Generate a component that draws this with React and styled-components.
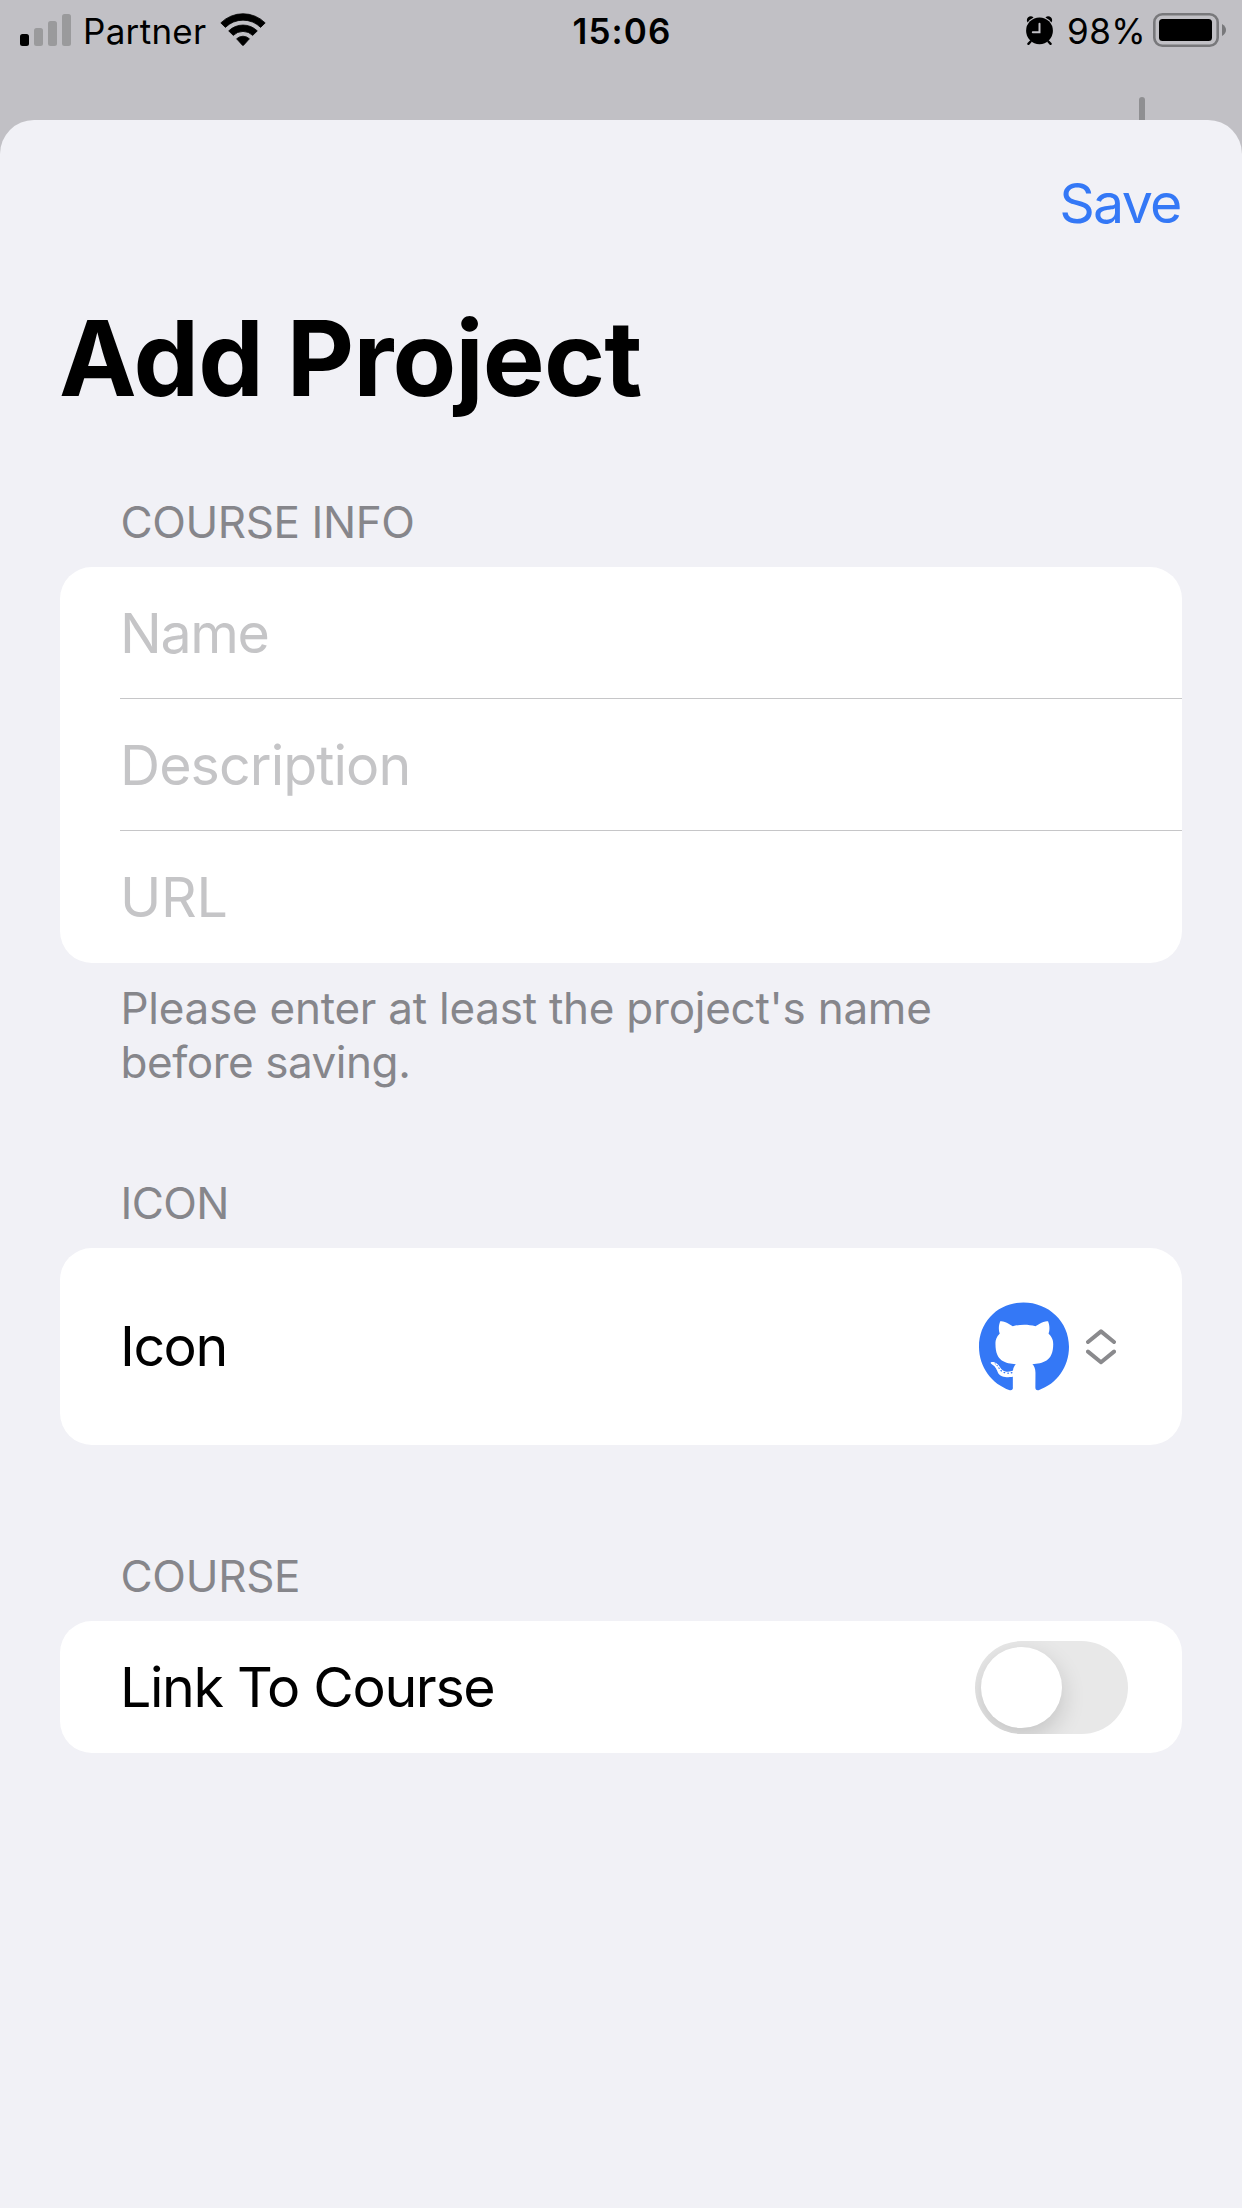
import React from "react";
import styled, { createGlobalStyle } from "styled-components";
import { FaGithub } from "react-icons/fa";

const GlobalStyle = createGlobalStyle`
  body { margin: 0; background: #c1c0c5; }
  * { box-sizing: border-box; }
`;

const Screen = styled.div`
  width: 1242px;
  height: 2208px;
  display: flex;
  flex-direction: column;
  background: #c1c0c5;
  font-family: Inter, "Liberation Sans", sans-serif;
  color: #000;
  overflow: hidden;
`;

const StatusBar = styled.header`
  height: 97px;
  padding: 13px 16px 0 20px;
  display: grid;
  grid-template-columns: 1fr auto 1fr;
  align-items: start;
`;

const StatusGroup = styled.div`
  display: flex;
  align-items: flex-start;
  justify-content: ${(p) => (p.$end ? "flex-end" : "flex-start")};
`;

const StatusText = styled.span`
  font-size: 35px;
  line-height: 37px;
  font-weight: ${(p) => p.$weight || 400};
  letter-spacing: ${(p) => p.$track || 0}px;
  margin-left: ${(p) => p.$left || 0}px;
  margin-right: ${(p) => p.$right || 0}px;
  white-space: nowrap;
`;

const Glyph = styled.svg`
  display: block;
  flex: none;
`;

const Behind = styled.div`
  height: 23px;
  display: flex;
  justify-content: flex-end;
  padding-right: 97px;
`;

const Grip = styled.div`
  width: 6px;
  height: 23px;
  border-radius: 3px 3px 0 0;
  background: #8f8f92;
`;

const Sheet = styled.main`
  flex: 1;
  display: flex;
  flex-direction: column;
  padding: 50px 60px 0;
  border-radius: 34px 34px 0 0;
  background: #f1f1f6;
`;

const Toolbar = styled.div`
  display: flex;
  justify-content: flex-end;
  padding-right: 1.5px;
`;

const SaveButton = styled.button`
  border: 0;
  padding: 0;
  background: none;
  font: 400 55.5px/66px Inter, "Liberation Sans", sans-serif;
  letter-spacing: -1.8px;
  color: #3478f6;
`;

const Title = styled.h1`
  margin: 60px 0 0 -1px;
  font-size: 104px;
  line-height: 124px;
  font-weight: 700;
  letter-spacing: -0.8px;
`;

const Section = styled.section`
  display: flex;
  flex-direction: column;
  margin-top: ${(p) => p.$top}px;
`;

const SectionHeader = styled.h2`
  margin: 0 0 18px;
  padding-left: 60.5px;
  font-size: 44px;
  line-height: 54px;
  font-weight: 400;
  letter-spacing: ${(p) => p.$track}px;
  color: #86868b;
`;

const SectionFooter = styled.p`
  margin: 18px 0 0;
  padding: 0 180px 0 60.5px;
  font-size: 44px;
  line-height: 54px;
  letter-spacing: ${(p) => p.$track}px;
  color: #86868b;
`;

const Tight = styled.span`
  letter-spacing: -0.45px;
`;

const Card = styled.div`
  display: flex;
  flex-direction: column;
  padding-left: 60px;
  border-radius: 32px;
  background: #fff;
  overflow: hidden;
`;

const Row = styled.div`
  height: ${(p) => p.$height || 132}px;
  padding-right: ${(p) => p.$right || 0}px;
  display: flex;
  align-items: center;
  justify-content: space-between;
  box-shadow: ${(p) => (p.$divided ? "inset 0 -1px #c6c6c8" : "none")};
`;

const Field = styled.input`
  width: 100%;
  height: 100px;
  margin: 0 0 2px;
  border: 0;
  padding: 0;
  outline: 0;
  background: transparent;
  font: 400 55.5px/66px Inter, "Liberation Sans", sans-serif;
  letter-spacing: ${(p) => p.$track}px;
  &::placeholder { color: #c5c5c7; opacity: 1; }
`;

const RowLabel = styled.span`
  font-size: 55.5px;
  line-height: 66px;
  margin-bottom: ${(p) => p.$lift || 0}px;
  letter-spacing: ${(p) => p.$track}px;
`;

const Picker = styled.div`
  display: flex;
  align-items: center;
  gap: 17px;
  color: #3478f6;
`;

const Badge = styled(FaGithub)`
  display: block;
  width: 90px;
  height: 93px;
  margin-top: 1px;
`;

const Switch = styled.div`
  width: 153px;
  height: 93px;
  padding: 6px;
  border-radius: 47px;
  background: #e8e8e8;
  overflow: hidden;
`;

const Knob = styled.div`
  width: 81px;
  height: 81px;
  border-radius: 50%;
  background: #fff;
  box-shadow: 0 9px 24px rgba(0, 0, 0, 0.16);
`;

function Signal() {
  return (
    <Glyph width="51" height="34" viewBox="0 0 51 34">
      <rect x="0" y="21" width="9" height="12" rx="2.5" />
      <g fill="#9a9a9c">
        <rect x="14" y="15" width="9" height="18" rx="2.5" />
        <rect x="28" y="8" width="9" height="25" rx="2.5" />
        <rect x="42" y="1" width="9" height="32" rx="2.5" />
      </g>
    </Glyph>
  );
}

function Wifi() {
  return (
    <Glyph width="46" height="34" viewBox="0 0 46 34">
      <path d="M0.8 9.9 A31.5 31.5 0 0 1 45.2 9.9 L40.6 14.4 A25 25 0 0 0 5.4 14.4 Z" strokeLinejoin="round" stroke="#000" strokeWidth="0.8" />
      <path d="M8.7 17.9 A20.4 20.4 0 0 1 37.3 17.9 L32.7 22.4 A13.8 13.8 0 0 0 13.3 22.4 Z" strokeLinejoin="round" stroke="#000" strokeWidth="0.8" />
      <path d="M16.6 25.8 A9.2 9.2 0 0 1 29.4 25.8 L23.6 32.2 Q23 32.8 22.4 32.2 Z" strokeLinejoin="round" stroke="#000" strokeWidth="0.8" />
    </Glyph>
  );
}

function Alarm() {
  return (
    <Glyph width="28" height="34" viewBox="0 0 28 34">
      <circle cx="13.5" cy="17.8" r="13.4" />
      <path d="M1.6 9.4 A4 4 0 0 1 1.9 4.6 A4.2 4.2 0 0 1 7.6 4.4 Q3.8 6.2 1.6 9.4 Z M25.4 9.4 A4 4 0 0 0 25.1 4.6 A4.2 4.2 0 0 0 19.4 4.4 Q23.2 6.2 25.4 9.4 Z" />
      <path d="M4.6 28.5 L2.4 30.8 M22.4 28.5 L24.6 30.8" stroke="#000" strokeWidth="2.4" strokeLinecap="round" />
      <path d="M13.5 10.8 V19.3 H6.8" fill="none" stroke="#c1c0c5" strokeWidth="2" strokeLinecap="round" />
    </Glyph>
  );
}

function Battery() {
  return (
    <Glyph width="73" height="34" viewBox="0 0 73 34">
      <rect x="1.3" y="1.3" width="63.4" height="31.4" rx="8" fill="none" stroke="#78787b" strokeWidth="2.6" />
      <rect x="6" y="6" width="53" height="22" rx="3.5" />
      <path d="M69 11 Q73 13.5 73 17 Q73 20.5 69 23 Z" fill="#78787b" />
    </Glyph>
  );
}

function Chevrons() {
  return (
    <Glyph width="30" height="36" viewBox="0 0 30 36">
      <path d="M2 13 L15 2.4 L28 13 M2 22.6 L15 33.2 L28 22.6" fill="none" stroke="#8a8a8d" strokeWidth="4" strokeLinecap="round" strokeLinejoin="round" />
    </Glyph>
  );
}

export default function App() {
  return (
    <Screen>
      <GlobalStyle />
      <StatusBar>
        <StatusGroup>
          <Signal />
          <StatusText $left={12} $right={13} $track={0.3}>Partner</StatusText>
          <Wifi />
        </StatusGroup>
        <StatusText $weight={600} $track={1.1} $right={2}>15:06</StatusText>
        <StatusGroup $end>
          <Alarm />
          <StatusText $left={13} $right={7} $track={0.4}>98%</StatusText>
          <Battery />
        </StatusGroup>
      </StatusBar>
      <Behind><Grip /></Behind>
      <Sheet>
        <Toolbar><SaveButton>Save</SaveButton></Toolbar>
        <Title>Add Project</Title>
        <Section $top={75}>
          <SectionHeader $track={-0.4}>COURSE INFO</SectionHeader>
          <Card>
            <Row $divided><Field placeholder="Name" $track={-1.4} /></Row>
            <Row $divided><Field placeholder="Description" $track={-0.9} /></Row>
            <Row><Field placeholder="URL" $track={-0.3} /></Row>
          </Card>
          <SectionFooter $track={-0.25}>
            Please enter at least the project's name <Tight>before saving.</Tight>
          </SectionFooter>
        </Section>
        <Section $top={87}>
          <SectionHeader $track={-0.6}>ICON</SectionHeader>
          <Card>
            <Row $height={197} $right={66}>
              <RowLabel $track={-1.5} $lift={2}>Icon</RowLabel>
              <Picker>
                <Badge />
                <Chevrons />
              </Picker>
            </Row>
          </Card>
        </Section>
        <Section $top={104}>
          <SectionHeader $track={-0.3}>COURSE</SectionHeader>
          <Card>
            <Row $right={54}>
              <RowLabel $track={-1.35}>Link To Course</RowLabel>
              <Switch><Knob /></Switch>
            </Row>
          </Card>
        </Section>
      </Sheet>
    </Screen>
  );
}
